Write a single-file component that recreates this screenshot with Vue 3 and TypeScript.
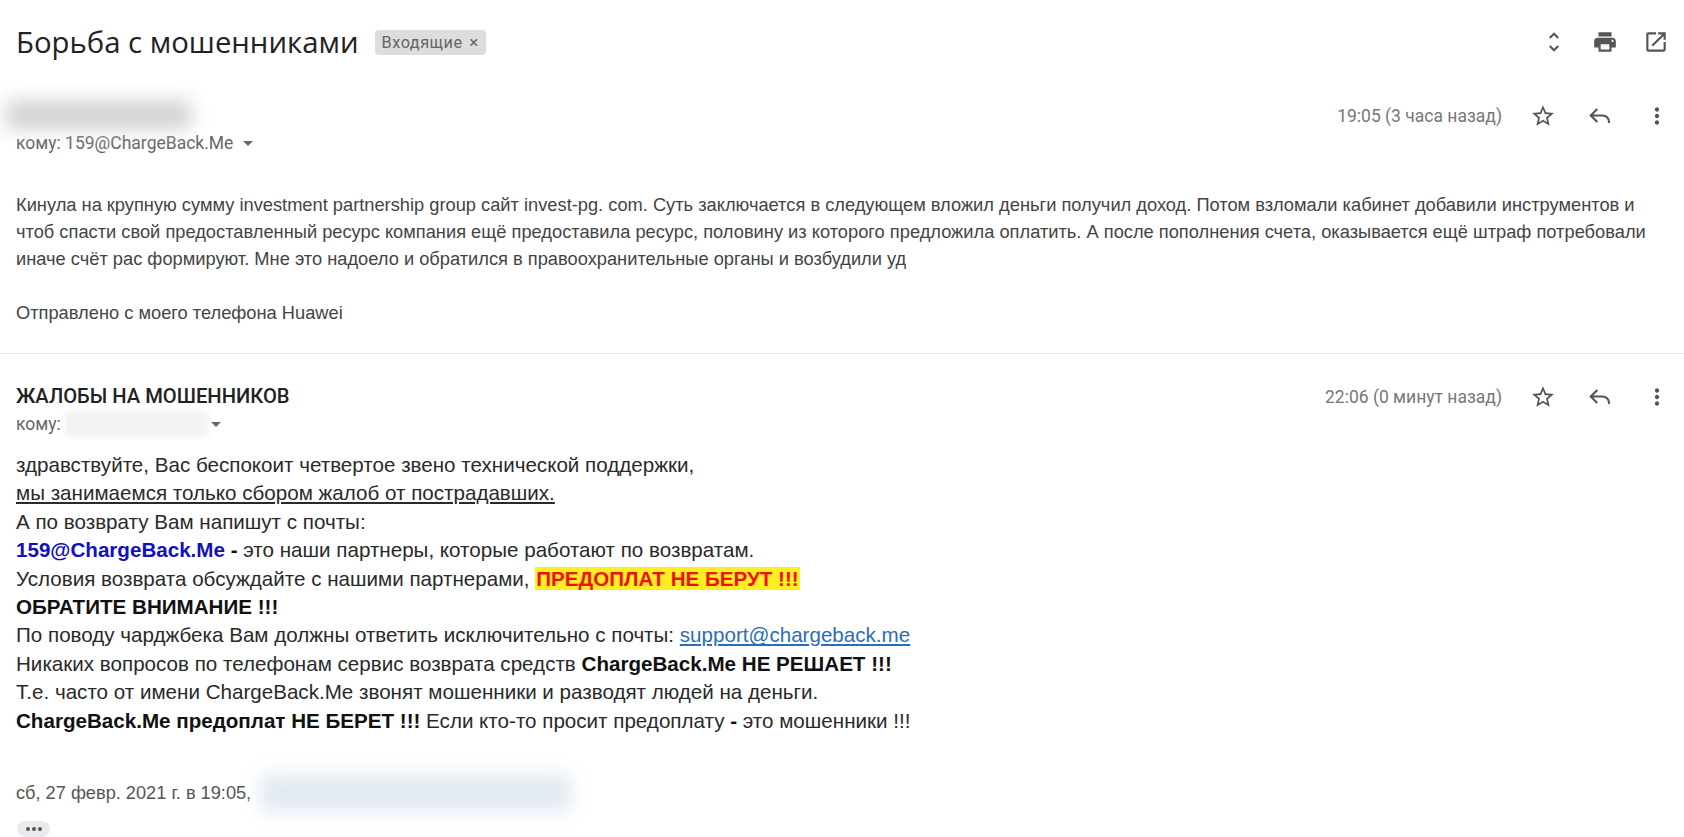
<script setup lang="ts">
const firstBody = [
  "Кинула на крупную сумму investment partnership group сайт invest-pg. com. Суть заключается в следующем вложил деньги получил доход. Потом взломали кабинет добавили инструментов и",
  "чтоб спасти свой предоставленный ресурс компания ещё предоставила ресурс, половину из которого предложила оплатить. А после пополнения счета, оказывается ещё штраф потребовали",
  "иначе счёт рас формируют. Мне это надоело и обратился в правоохранительные органы и возбудили уд",
];
</script>

<template>
  <div class="page">
    <header class="subject">
      <h1>Борьба с мошенниками</h1>
      <span class="chip">Входящие <span class="chip-x">×</span></span>
      <div class="subject-icons">
        <svg viewBox="0 0 24 24"><path d="M12 5.83 15.17 9l1.41-1.41L12 3 7.41 7.59 8.83 9 12 5.83zm0 12.34L8.83 15l-1.41 1.41L12 21l4.59-4.59L15.17 15 12 18.17z" /></svg>
        <svg viewBox="0 0 24 24"><path d="M19 8H5c-1.66 0-3 1.34-3 3v6h4v4h12v-4h4v-6c0-1.66-1.34-3-3-3zm-3 11H8v-5h8v5zm3-7c-.55 0-1-.45-1-1s.45-1 1-1 1 .45 1 1-.45 1-1 1zm-1-9H6v4h12V3z" /></svg>
        <svg viewBox="0 0 24 24"><path d="M19 19H5V5h7V3H5a2 2 0 0 0-2 2v14a2 2 0 0 0 2 2h14c1.1 0 2-.9 2-2v-7h-2v7zM14 3v2h3.59l-9.83 9.83 1.41 1.41L19 6.41V10h2V3h-7z" /></svg>
      </div>
    </header>

    <section class="message first">
      <div class="msg-head">
        <div class="who">
          <div class="blur-name"></div>
          <div class="to">кому: 159@ChargeBack.Me <span class="caret"></span></div>
        </div>
        <div class="meta">
          <span class="time">19:05 (3 часа назад)</span>
          <svg viewBox="0 0 24 24"><path d="M22 9.24l-7.19-.62L12 2 9.19 8.63 2 9.24l5.46 4.73L5.82 21 12 17.27 18.18 21l-1.63-7.03L22 9.24zM12 15.4l-3.76 2.27 1-4.28-3.32-2.88 4.38-.38L12 6.1l1.71 4.04 4.38.38-3.32 2.88 1 4.28L12 15.4z" /></svg>
          <svg class="reply" viewBox="0 0 24 24"><path d="M9.5 5.5 3.5 11.5l6 6M3.5 11.5H14c4 0 6.5 2.8 6.5 7" /></svg>
          <svg viewBox="0 0 24 24"><path d="M12 8c1.1 0 2-.9 2-2s-.9-2-2-2-2 .9-2 2 .9 2 2 2zm0 2c-1.1 0-2 .9-2 2s.9 2 2 2 2-.9 2-2-.9-2-2-2zm0 6c-1.1 0-2 .9-2 2s.9 2 2 2 2-.9 2-2-.9-2-2-2z" /></svg>
        </div>
      </div>
      <div class="plain">
        <div v-for="line in firstBody" :key="line" class="plain-line">{{ line }}</div>
        <div class="plain-line gap">Отправлено с моего телефона Huawei</div>
      </div>
    </section>

    <section class="message second">
      <div class="msg-head">
        <div class="who">
          <div class="sender">ЖАЛОБЫ НА МОШЕННИКОВ</div>
          <div class="to">кому: <span class="blur-to"></span><span class="caret"></span></div>
        </div>
        <div class="meta">
          <span class="time">22:06 (0 минут назад)</span>
          <svg viewBox="0 0 24 24"><path d="M22 9.24l-7.19-.62L12 2 9.19 8.63 2 9.24l5.46 4.73L5.82 21 12 17.27 18.18 21l-1.63-7.03L22 9.24zM12 15.4l-3.76 2.27 1-4.28-3.32-2.88 4.38-.38L12 6.1l1.71 4.04 4.38.38-3.32 2.88 1 4.28L12 15.4z" /></svg>
          <svg class="reply" viewBox="0 0 24 24"><path d="M9.5 5.5 3.5 11.5l6 6M3.5 11.5H14c4 0 6.5 2.8 6.5 7" /></svg>
          <svg viewBox="0 0 24 24"><path d="M12 8c1.1 0 2-.9 2-2s-.9-2-2-2-2 .9-2 2 .9 2 2 2zm0 2c-1.1 0-2 .9-2 2s.9 2 2 2 2-.9 2-2-.9-2-2-2zm0 6c-1.1 0-2 .9-2 2s.9 2 2 2 2-.9 2-2-.9-2-2-2z" /></svg>
        </div>
      </div>
      <div class="rich">
        <div>здравствуйте, Вас беспокоит четвертое звено технической поддержки,</div>
        <div><u>мы занимаемся только сбором жалоб от пострадавших.</u></div>
        <div>А по возврату Вам напишут с почты:</div>
        <div><b class="blue">159@ChargeBack.Me</b> <b>-</b> это наши партнеры, которые работают по возвратам.</div>
        <div>Условия возврата обсуждайте с нашими партнерами, <b class="warn">ПРЕДОПЛАТ НЕ БЕРУТ !!!</b></div>
        <div><b>ОБРАТИТЕ ВНИМАНИЕ !!!</b></div>
        <div>По поводу чарджбека Вам должны ответить исключительно с почты: <a class="mail">support@chargeback.me</a></div>
        <div>Никаких вопросов по телефонам сервис возврата средств <b>ChargeBack.Me НЕ РЕШАЕТ !!!</b></div>
        <div>Т.е. часто от имени ChargeBack.Me звонят мошенники и разводят людей на деньги.</div>
        <div><b>ChargeBack.Me предоплат НЕ БЕРЕТ !!!</b> Если кто-то просит предоплату <b>-</b> это мошенники !!!</div>
      </div>
      <div class="quote">сб, 27 февр. 2021 г. в 19:05, <span class="blur-quote"></span></div>
      <div class="more-btn"><i></i><i></i><i></i></div>
    </section>
  </div>
</template>

<style scoped>
.page {
  width: 1684px;
  height: 837px;
  overflow: hidden;
  background: #fff;
  font-family: Roboto, "Liberation Sans", sans-serif;
  color: #222;
}

svg {
  width: 26px;
  height: 26px;
  fill: #555;
  flex: none;
}

svg.reply {
  fill: none;
  stroke: #555;
  stroke-width: 2;
}

.subject {
  display: flex;
  align-items: center;
  height: 84px;
  padding: 0 15px 0 16px;
}

h1 {
  margin: 0;
  font-family: "Open Sans", Roboto, sans-serif;
  font-size: 29.3px;
  font-weight: 400;
  color: #222;
}

.chip {
  margin-left: 16px;
  padding: 0 7px;
  height: 25px;
  line-height: 25px;
  background: #ddd;
  border-radius: 4px;
  font-size: 16.3px;
  letter-spacing: 0.5px;
  color: #666;
}

.chip-x {
  margin-left: 2px;
  font-size: 17px;
}

.subject-icons {
  margin-left: auto;
  display: flex;
  gap: 25px;
}

.message {
  padding: 0 14px 0 16px;
}

.first {
  height: 269px;
  border-bottom: 1px solid #e8e8e8;
}

.msg-head {
  display: flex;
  justify-content: space-between;
  align-items: flex-start;
}

.first .msg-head {
  padding-top: 16px;
  height: 107px;
  box-sizing: border-box;
}

.first .meta {
  margin-top: 3px;
}

.blur-name {
  width: 185px;
  height: 30px;
  margin-left: -10px;
  background: #d4d4d4;
  filter: blur(9px);
}

.to {
  margin-top: 3px;
  display: flex;
  align-items: center;
  font-size: 17.5px;
  line-height: 20px;
  color: #666;
  white-space: pre;
}

.first .to {
  margin-top: 3px;
}

.caret {
  width: 0;
  height: 0;
  margin-left: 5px;
  border: 5px solid transparent;
  border-top-color: #666;
  border-bottom: 0;
}

.second .caret {
  margin-left: 3px;
}

.meta {
  display: flex;
  align-items: center;
  gap: 31px;
}

.meta .time {
  margin-right: -3px;
  font-size: 17.5px;
  color: #777;
}

.plain {
  font-family: "Liberation Sans", Arial, sans-serif;
  font-size: 18.28px;
  line-height: 27px;
  color: #444;
  white-space: nowrap;
}

.gap {
  margin-top: 27px;
}

.second .msg-head {
  padding-top: 30px;
  height: 97px;
  box-sizing: border-box;
}

.sender {
  font-size: 20.2px;
  font-weight: 500;
  line-height: 24px;
  color: #222;
}

.second .to {
  margin-top: 6px;
}

.blur-to {
  display: block;
  width: 143px;
  height: 26px;
  margin: -4px 0;
  background: #f3f3f3;
  filter: blur(2px);
}

.rich {
  font-family: "Liberation Sans", Arial, sans-serif;
  font-size: 20.6px;
  line-height: 28.4px;
  color: #2a2a2a;
  white-space: nowrap;
}

b {
  color: #111;
}

.blue {
  color: #1111bb;
}

.warn {
  padding: 0 1px;
  background: #ffee22;
  color: #ee1111;
}

.mail {
  color: #2a6fb5;
  text-decoration: underline;
}

.quote {
  display: flex;
  align-items: center;
  gap: 4px;
  height: 50px;
  margin-top: 33px;
  font-family: "Liberation Sans", Arial, sans-serif;
  font-size: 18.2px;
  color: #555;
  white-space: pre;
}

.blur-quote {
  display: block;
  width: 311px;
  height: 38px;
  background: #e3e9f2;
  filter: blur(9px);
}

.more-btn {
  display: flex;
  align-items: center;
  justify-content: center;
  gap: 2px;
  width: 33px;
  height: 16px;
  margin: 3px 0 0 1px;
  background: #e8eaed;
  border-radius: 8px;
}

.more-btn i {
  width: 4px;
  height: 4px;
  border-radius: 50%;
  background: #555;
}
</style>

<style>
html,
body {
  margin: 0;
  overflow: hidden;
}
</style>
